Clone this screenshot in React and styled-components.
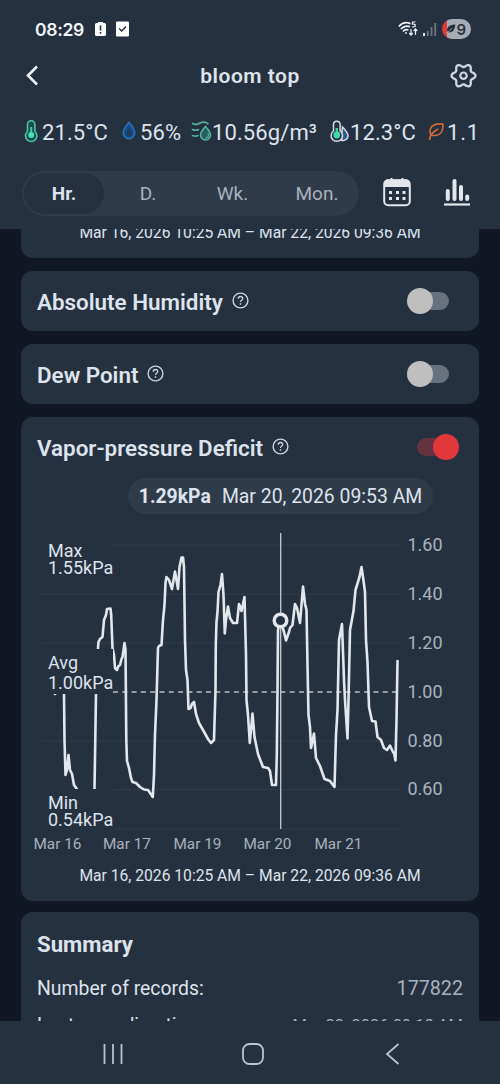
import React from "react"
import styled, { createGlobalStyle, css } from "styled-components"

const colors = {
  page: "#111824",
  surface: "#263140",
  raised: "#303b49",
  text: "#dde3ec",
  muted: "#a9b1bc",
  line: "#e3e6ea",
  grid: "#313c4b",
  red: "#e2383b",
}

const GlobalStyle = createGlobalStyle`
  * { box-sizing: border-box; }
  body {
    margin: 0;
    background: ${colors.page};
    font-family: Roboto, sans-serif;
    color: ${colors.text};
  }
`

const Screen = styled.div`
  width: 500px;
  height: 1084px;
  display: flex;
  flex-direction: column;
  overflow: hidden;
  background: ${colors.page};
`

const Header = styled.header`
  flex: none;
  height: 229px;
  background: ${colors.surface};
`

const StatusBar = styled.div`
  height: 58px;
  padding: 0 29px 0 35px;
  display: flex;
  align-items: center;
`

const Clock = styled.span`
  font-family: Inter, sans-serif;
  font-size: 17.5px;
  font-weight: 600;
  width: 60px;
  letter-spacing: -0.3px;
  color: #f1f4f8;
`

const StatusIcons = styled.div`
  display: flex;
  align-items: center;
  gap: ${p => p.$gap}px;
  margin-left: ${p => (p.$end ? "auto" : "0")};
`

const Battery = styled.div`
  width: 29px;
  height: 20px;
  border-radius: 10px;
  background: linear-gradient(90deg, ${colors.red} 5px, #a6abb4 5px);
  display: flex;
  align-items: center;
  justify-content: flex-end;
  padding-right: 5px;
  font: 600 15px Inter, sans-serif;
  color: #263140;
`

const TitleBar = styled.div`
  height: 36px;
  padding: 0 22px 0 25px;
  display: grid;
  grid-template-columns: 30px 1fr 30px;
  align-items: center;

  svg:last-child {
    justify-self: end;
  }
`

const Title = styled.h1`
  margin: 0;
  padding-right: 3px;
  text-align: center;
  font-size: 21px;
  font-weight: 600;
  line-height: 24px;
  letter-spacing: 0.5px;
`

const Readings = styled.div`
  height: 77px;
  margin: 0 21px 0 22px;
  padding-top: 1px;
  display: flex;
  align-items: center;
  overflow: hidden;
`

const Reading = styled.div`
  flex: none;
  display: flex;
  align-items: center;
  width: ${p => p.$width}px;
  font-size: 22px;
  line-height: 26px;
  letter-spacing: ${p => p.$tracking || 0.1}px;
  white-space: nowrap;

  svg {
    flex: none;
    margin-bottom: 4px;
  }
`

const Toolbar = styled.div`
  display: flex;
  align-items: center;
  padding-left: 22px;
`

const Segments = styled.div`
  width: 337px;
  height: 45px;
  padding: 2px;
  border-radius: 23px;
  background: ${colors.raised};
  display: grid;
  grid-template-columns: 80px 88px 81px 88px;
`

const Segment = styled.div`
  display: flex;
  align-items: center;
  justify-content: center;
  font-size: 19px;
  border-radius: 21px;
  color: ${colors.muted};
  ${p =>
    p.$active &&
    css`
      background: ${colors.surface};
      color: ${colors.text};
      font-weight: 700;
    `};
`

const ToolIcons = styled.div`
  display: flex;
  align-items: center;
  gap: 33px;
  margin-left: 24px;
  margin-bottom: 3px;
`

const Content = styled.main`
  flex: 1;
  min-height: 0;
  overflow: hidden;
  padding: 0 21px;
`

const Card = styled.section`
  display: flow-root;
  height: ${p => p.$height}px;
  margin-bottom: ${p => p.$gap || 13}px;
  border-radius: ${p => (p.$cut ? "0 0 12px 12px" : "12px")};
  background: ${colors.surface};
`

const CardHeader = styled.div`
  height: 60px;
  padding: 0 20px 0 16px;
  display: flex;
  align-items: center;
`

const CardTitle = styled.h2`
  margin: 0 9px 0 0;
  padding-top: 1px;
  font-size: 22.4px;
  font-weight: 600;
  line-height: 28px;
`

const Range = styled.div`
  height: 22px;
  font-size: 15.65px;
  line-height: 22px;
  text-align: center;
  margin-top: ${p => p.$top}px;
`

const SwitchTrack = styled.div`
  width: ${p => (p.$on ? 36 : 28)}px;
  height: 18px;
  border-radius: 9px;
  margin-left: auto;
  margin-right: ${p => (p.$on ? 6 : 10)}px;
  display: flex;
  align-items: center;
  justify-content: ${p => (p.$on ? "flex-end" : "flex-start")};
  background: ${p => (p.$on ? "#64333f" : "#68727e")};
`

const SwitchThumb = styled.div`
  flex: none;
  width: 26px;
  height: 26px;
  border-radius: 50%;
  margin: 0 ${p => (p.$on ? "-6px" : "0")} 0 ${p => (p.$on ? "0" : "-14px")};
  background: ${p => (p.$on ? colors.red : "#bfbfbf")};
`

const Tooltip = styled.div`
  width: 305px;
  height: 36px;
  margin: 1px 0 0 107px;
  border-radius: 18px;
  background: ${colors.raised};
  display: flex;
  align-items: center;
  justify-content: center;
  gap: 11px;
  font-size: 19.4px;
  white-space: nowrap;
`

const ChartSvg = styled.svg`
  display: block;
  font-family: Roboto, sans-serif;
`

const SummaryTitle = styled.h2`
  margin: 0;
  padding: 18px 16px 0;
  font-size: 22.2px;
  font-weight: 700;
  line-height: 28px;
`

const SummaryRow = styled.div`
  display: flex;
  justify-content: space-between;
  padding: ${p => p.$top}px 16px 0;
  font-size: 19.4px;
  line-height: 24px;

  span:last-child {
    color: ${colors.muted};
    font-size: ${p => (p.$small ? 16.5 : 19.7)}px;
  }
`

const NavBar = styled.nav`
  flex: none;
  height: 63px;
  padding: 3px 99px 0 102px;
  display: flex;
  align-items: center;
  justify-content: space-between;
  background: ${colors.surface};

  svg:nth-child(2) {
    margin-right: 4px;
  }
`

const BatteryAlert = () => (
  <svg width="11" height="16" viewBox="0 0 11 16">
    <path d="M3 2V1h5v1h1.500Q11 2 11 3.500v10q0 1.500-1.500 1.500h-8Q0 15 0 13.500v-10Q0 2 1.500 2Z" fill="#fff" />
    <path d="M5.500 4.500v5M5.500 11v1.700" stroke={colors.surface} strokeWidth="1.6" />
  </svg>
)

const CheckBadge = () => (
  <svg width="13" height="16" viewBox="0 0 13 16">
    <rect y=".5" width="13" height="15" rx="1" fill="#fff" />
    <path d="m3.200 7.500 2.500 2.500 4.300-4.500" fill="none" stroke={colors.surface} strokeWidth="1.5" />
  </svg>
)

const Wifi = () => (
  <svg width="20" height="16" viewBox="0 0 20 16" fill="none" stroke="#eef1f5" strokeWidth="1.7">
    <path d="M.8 5.500Q6-.2 12.500 2.700M2.900 8Q7 3.700 12 5.800M5 10.300Q7.300 8 10.500 9" />
    <circle cx="8" cy="12" r=".7" fill="#eef1f5" strokeWidth=".6" />
    <path d="M17.500 1h-3v2.200h1.300q1.600 0 1.600 1.300t-1.600 1.300h-1.500" strokeWidth="1.2" />
    <path d="M13 8v6M11.200 12l1.800 2 1.800-2M17.500 14V8M15.700 10l1.800-2 1.800 2" strokeWidth="1.2" />
  </svg>
)

const Signal = () => (
  <svg width="14" height="15" viewBox="0 0 14 15">
    <rect x="0" y="11" width="2" height="3" fill="#fff" />
    <path d="M4.800 14V9M8.500 14V5M12.200 14V1" stroke="#6c7682" strokeWidth="1.8" />
  </svg>
)

const BatteryLeaf = () => (
  <svg width="10" height="10" viewBox="0 0 10 10">
    <path d="M9.500.5Q3 .5 1.500 4 0 7.500 3 8.500 8.500 8.500 9.500.5Z" fill="#263140" />
    <path d="M0 9q3-.5 6-5" fill="none" stroke="#a6abb4" strokeWidth=".8" />
  </svg>
)

const BackIcon = () => (
  <svg width="14" height="22" viewBox="0 0 14 22">
    <path d="m12 1.500-9 9 9 9" fill="none" stroke="#eef1f5" strokeWidth="2.6" />
  </svg>
)

// six rounded teeth around the hub
const gearPath =
  "M" +
  Array.from({ length: 72 }, (_, i) => {
    const a = (i * Math.PI) / 36
    const wave = Math.cos(6 * a)
    const r = 10.3 + 1.7 * wave
    return `${(13.5 + r * Math.cos(a)).toFixed(2)} ${(13.7 + r * Math.sin(a)).toFixed(2)}`
  }).join("L") +
  "Z"

const GearIcon = () => (
  <svg width="28" height="28" viewBox="0 0 28 28" fill="none" stroke="#d0d7e1" strokeLinejoin="round">
    <path d={gearPath} strokeWidth="2.3" />
    <circle cx="13.5" cy="13.7" r="3.2" strokeWidth="2.2" />
  </svg>
)

const TempIcon = () => (
  <svg width="20" height="24" viewBox="0 0 20 24" fill="none" stroke="#4cc7a2" strokeWidth="1.6">
    <path d="M5.500 12.500V5.500a3.700 3.700 0 0 1 7.400 0V12.500a5.700 5.700 0 1 1-7.400 0Z" fill="#174b4c" />
    <path d="M9.200 8v8" strokeWidth="2" />
    <circle cx="9.200" cy="16" r="3" fill="#4fdfaf" stroke="none" />
  </svg>
)

const HumidityIcon = () => (
  <svg width="19" height="24" viewBox="0 0 19 24">
    <path d="M8 3.500Q2.300 9.800 2.300 14a5.700 5.700 0 0 0 11.400 0Q13.700 9.800 8 3.500Z" fill="#134a88" stroke="#2877bd" strokeWidth="1.5" />
    <path d="M8 9Q5.500 12.500 5.500 14.700a2.500 2.500 0 0 0 5 0Q10.500 12.500 8 9Z" fill="#263a52" />
  </svg>
)

const VaporIcon = () => (
  <svg width="21" height="24" viewBox="0 0 21 24" fill="none" stroke="#52b49b" strokeWidth="1.6" strokeLinecap="round">
    <path d="M1.500 4.500q3.500 2 7.500-.5 5-2 8 .8M1.500 10.500q3 1.500 6 0M1.500 16.500q3 1.200 5.500 0" />
    <path d="M14.500 7.500Q9.500 13 9.500 16a5 5 0 0 0 10 0Q19.500 13 14.500 7.500Z" fill="#295e60" />
    <path d="M17.200 14.500q1 4-2.500 4.500" strokeWidth="1.2" />
  </svg>
)

const DewIcon = () => (
  <svg width="21" height="24" viewBox="0 0 21 24" stroke="#d4dae2" strokeWidth="1.5">
    <path d="M13.500 8q6 6 5.500 9.500a5 5 0 0 1-7 3.500Z" fill="#34588b" />
    <path d="M4.500 12V5.500a3.300 3.300 0 0 1 6.600 0V12a5.700 5.700 0 1 1-6.600 0Z" fill={colors.surface} />
    <path d="M7.800 9v7" stroke="#3fcf9e" strokeWidth="2.4" />
    <circle cx="7.800" cy="16" r="3.400" fill="#3fdaa6" stroke="none" />
  </svg>
)

const LeafIcon = () => (
  <svg width="19" height="24" viewBox="0 0 19 24" fill="none" stroke="#d06a32" strokeWidth="1.6" strokeLinejoin="round">
    <path d="M15 5Q5 4.200 2.600 9.500 1 13.300 3.500 16.300 11.200 17.500 13.800 12.500 15.200 9.500 15 5Z" />
    <path d="M1.500 21q.3-6.500 8.500-11" />
  </svg>
)

const CalendarIcon = () => (
  <svg width="28" height="30" viewBox="0 0 28 30">
    <rect x="1.200" y="3.200" width="25.600" height="25" rx="4" fill="none" stroke={colors.line} strokeWidth="2" />
    <path d="M1 10V7q0-4.500 4.500-4.500h17Q27 2.500 27 7v3ZM7.500 1h2v3h-2ZM18.500 1h2v3h-2Z" fill={colors.line} />
    <path d="M6 15.500h3m4 0h3m3.500 0h3M6 21.500h3m4 0h3m3.500 0h3" stroke={colors.line} strokeWidth="3" />
  </svg>
)

const BarsIcon = () => (
  <svg width="26" height="28" viewBox="0 0 26 28" stroke={colors.line}>
    <path d="M3.800 13v8M10.500 3v18M17 9v12M23.200 18.500V21" strokeWidth="4" strokeLinecap="round" />
    <path d="M0 26.500h26" strokeWidth="2.2" />
  </svg>
)

const HelpSvg = styled.svg`
  margin-bottom: 1px;
`

const HelpIcon = () => (
  <HelpSvg width="17" height="17" viewBox="0 0 17 17" fill="none" stroke="#ccd2da">
    <circle cx="8.500" cy="8.500" r="7.400" strokeWidth="1.4" />
    <path d="M6.300 6.700q0-2.200 2.200-2.200t2.200 2q0 1-1.100 1.700-1.100.7-1.100 1.800" strokeWidth="1.3" />
    <path d="M8.500 11.200v1.500" strokeWidth="1.5" />
  </HelpSvg>
)

const seriesPath =
  "M52 688L54 691 55 694 57 691 62 660 64 694 64.500 740 65.500 775 67 770 68.500 755 70 770 72 774 74 785 76.500 788.500 80 796 92 800 94.500 789 96 694 97 660 98 648 98.500 642 100 639 102.500 637 104 620 106 615 107 609 110.500 608.500 111.200 615 112.500 648 114 655 115 668 117 670 118.500 666 120 665 121.500 659 122.500 657 124.500 643 125.500 650 126.300 740 127 761 129 768 131 778 132.500 782 136 783 140 787 144 789.500 148 790 152.800 797 154 775 155 735 156.500 700 158 648 159 646 161.500 645 163 620 164.500 605 165.500 583 166.500 577 169 580 172 589 175 571.500 178 589 179.500 567 181.500 557.500 183 557.500 184 567 185 640 186 670 187.500 680 188.500 709 190.500 708 192 704 194 702 196 714 199 723 203 730 208 739 211 743 214 740 215.500 690 215.800 645 216.500 622 217.500 612 218.500 592 220.500 585 222 574 223.500 595 224.800 633.500 226 620 228 606.500 230 618 233 623 237 623 239 604 241.500 611 244.500 597 246 655 246.500 700 248 715 249.800 743 252.500 713.500 254.500 737 258 754 263 767 268 768 270 771 272 785 276 785 276.800 755 277.500 690 278 630 280.500 620.500 284 632 286 640.500 289 632 290 628 292.500 625 295 604 297 608 300 623 303 586.500 305 604 306.500 610 307.500 665 308.500 715 310 727 311 748 314 733.500 316 758 320 766 324.500 779 330 781 334.500 787 336 735 337.500 710 339 640 342 624 344 680 345 700 347.500 738.500 348.500 700 350 630 353.500 611 355.500 590 359.500 577 361.500 567 363 577 365 592 366 640 367.500 662 369 707 372 721 375.500 721.500 377.500 737 381 740 384 748 387 750 390 745.500 393 752 394 753 395.500 760.500 396.500 720 397.500 661"

const gridLines = [
  { y: 545, label: "1.60", from: 114 },
  { y: 594, label: "1.40", from: 41 },
  { y: 643, label: "1.20", from: 41 },
  { y: 692, label: "1.00", dashed: true },
  { y: 741, label: "0.80", from: 41 },
  { y: 789.5, label: "0.60", from: 114 },
  { y: 829, from: 114 },
]

const days = [
  { x: 33.5, label: "Mar 16" },
  { x: 103, label: "Mar 17" },
  { x: 173.5, label: "Mar 19" },
  { x: 243.5, label: "Mar 20" },
  { x: 314.5, label: "Mar 21" },
]

const stats = [
  { y: 556.5, label: "Max", value: "1.55kPa", top: 540, height: 38 },
  { y: 669, label: "Avg", value: "1.00kPa", top: 649, height: 45, lead: 20 },
  { y: 808.5, label: "Min", value: "0.54kPa", top: 789, height: 39 },
]

const Chart = () => (
  <ChartSvg width="458" height="351" viewBox="21 514 458 351">
    {gridLines.map(g =>
      g.dashed ? (
        <path key={g.y} d={`M113 ${g.y}H401`} stroke="#b7bdc5" strokeWidth="1.3" strokeDasharray="5 4.3" />
      ) : (
        <path key={g.y} d={`M${g.from} ${g.y}H401`} stroke={colors.grid} />
      )
    )}
    <path d={seriesPath} fill="none" stroke={colors.line} strokeWidth="2.6" strokeLinejoin="round" strokeLinecap="round" />
    {stats.map(s => (
      <g key={s.label} fill={colors.text} fontSize="18">
        <rect x="41" y={s.top} width="72" height={s.height} fill={colors.surface} />
        <text x="48" y={s.y}>{s.label}</text>
        <text x="48" y={s.y + (s.lead || 17.5)}>{s.value}</text>
      </g>
    ))}
    <path d="M280.700 533V829" stroke="#c5cad0" strokeWidth="1.3" />
    <circle cx="280.500" cy="620.500" r="6.300" fill={colors.surface} stroke={colors.line} strokeWidth="3.4" />
    {gridLines.map(g => (
      <text key={g.y} x="407.500" y={g.y + 5.5} fontSize="18" fill={colors.muted}>{g.label}</text>
    ))}
    {days.map(d => (
      <text key={d.label} x={d.x} y="849" fontSize="15.3" fill={colors.muted}>{d.label}</text>
    ))}
  </ChartSvg>
)

const Switch = ({ on }) => (
  <SwitchTrack $on={on}>
    <SwitchThumb $on={on} />
  </SwitchTrack>
)

const MetricHeader = ({ title, on }) => (
  <CardHeader>
    <CardTitle>{title}</CardTitle>
    <HelpIcon />
    <Switch on={on} />
  </CardHeader>
)

const readings = [
  { icon: <TempIcon />, value: "21.5°C", width: 99 },
  { icon: <HumidityIcon />, value: "56%", width: 70 },
  { icon: <VaporIcon />, value: "10.56g/m³", width: 138 },
  { icon: <DewIcon />, value: "12.3°C", width: 99 },
  { icon: <LeafIcon />, value: "1.13kPa", width: 100, tracking: 0.8 },
]

const period = "Mar 16, 2026 10:25 AM – Mar 22, 2026 09:36 AM"

const App = () => (
  <>
    <GlobalStyle />
    <Screen>
      <Header>
        <StatusBar>
          <Clock>08:29</Clock>
          <StatusIcons $gap={10}>
            <BatteryAlert />
            <CheckBadge />
          </StatusIcons>
          <StatusIcons $gap={5} $end>
            <Wifi />
            <Signal />
            <Battery>
              <BatteryLeaf />9
            </Battery>
          </StatusIcons>
        </StatusBar>
        <TitleBar>
          <BackIcon />
          <Title>bloom top</Title>
          <GearIcon />
        </TitleBar>
        <Readings>
          {readings.map(r => (
            <Reading key={r.value} $width={r.width} $tracking={r.tracking}>
              {r.icon}
              {r.value}
            </Reading>
          ))}
        </Readings>
        <Toolbar>
          <Segments>
            <Segment $active>Hr.</Segment>
            <Segment>D.</Segment>
            <Segment>Wk.</Segment>
            <Segment>Mon.</Segment>
          </Segments>
          <ToolIcons>
            <CalendarIcon />
            <BarsIcon />
          </ToolIcons>
        </Toolbar>
      </Header>
      <Content>
        <Card $height={29} $cut>
          <Range $top={-7}>{period}</Range>
        </Card>
        <Card $height={60}>
          <MetricHeader title="Absolute Humidity" />
        </Card>
        <Card $height={60}>
          <MetricHeader title="Dew Point" />
        </Card>
        <Card $height={484} $gap={11}>
          <MetricHeader title="Vapor-pressure Deficit" on />
          <Tooltip>
            <b>1.29kPa</b>
            <span>Mar 20, 2026 09:53 AM</span>
          </Tooltip>
          <Chart />
          <Range $top={0}>{period}</Range>
        </Card>
        <Card $height={200}>
          <SummaryTitle>Summary</SummaryTitle>
          <SummaryRow $top={19}>
            <span>Number of records:</span>
            <span>177822</span>
          </SummaryRow>
          <SummaryRow $top={13} $small>
            <span>Last recording time:</span>
            <span>Mar 22, 2026 09:18 AM</span>
          </SummaryRow>
        </Card>
      </Content>
      <NavBar>
        <svg width="22" height="22" viewBox="0 0 22 22" stroke="#b9c4d1" strokeWidth="1.8">
          <path d="M2.500 1v20M11 1v20M19.500 1v20" />
        </svg>
        <svg width="22" height="22" viewBox="0 0 22 22" fill="none" stroke="#b9c4d1" strokeWidth="1.8">
          <rect x="1" y="1" width="20" height="20" rx="6.5" />
        </svg>
        <svg width="16" height="22" viewBox="0 0 16 22" fill="none" stroke="#b9c4d1" strokeWidth="1.8">
          <path d="M13.500 1 2 11l11.500 10" />
        </svg>
      </NavBar>
    </Screen>
  </>
)

export default App
